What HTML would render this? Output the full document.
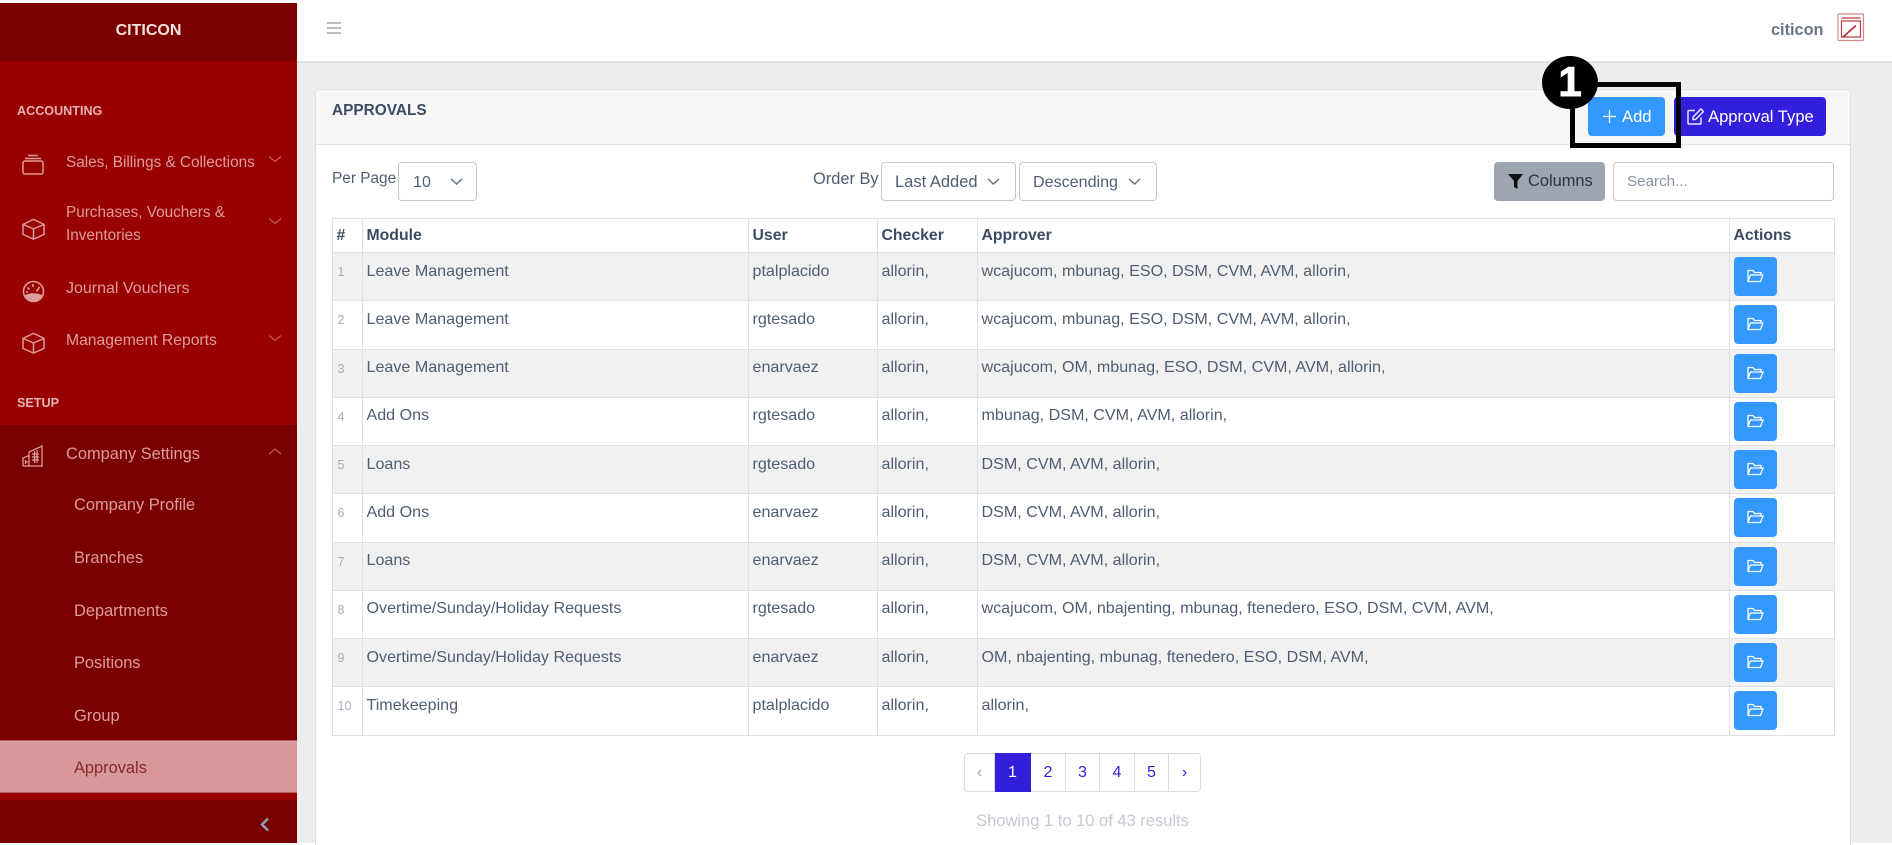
<!DOCTYPE html>
<html><head><meta charset="utf-8"><title>Approvals</title>
<style>
*{box-sizing:border-box}
html,body{margin:0;padding:0;width:1892px;height:845px;overflow:hidden;background:#fff;font-family:"Liberation Sans",sans-serif;color:#4f5d73;font-size:16.1px}
.a{position:absolute;white-space:nowrap}
#page{position:relative;width:1892px;height:845px;overflow:hidden;background:#fff}
.side{color:#dd9c9c}
.lbl{font-weight:bold;font-size:12.6px;color:#e6b2b2}
.ic{fill:none;stroke:#dd9c9c;stroke-width:1.5}
.chev{fill:none;stroke:#c45a5a;stroke-width:1.2}
.sel{background:#fff;border:1px solid #c4c9d0;border-radius:4px;height:39px;line-height:38px;padding-left:13px}
.sel svg{position:absolute;top:15px;fill:none;stroke:#636f83;stroke-width:1.5}
table{position:absolute;left:331.5px;top:218px;width:1502px;border-collapse:collapse;table-layout:fixed;background:#fff}
td,th{border:1px solid #dde0e4;padding:5.5px 4px 0;vertical-align:top;text-align:left;white-space:nowrap;overflow:hidden;height:48.25px;line-height:24px}
th{height:34px;padding-top:5px;font-weight:bold;color:#3c4b64;font-size:15.8px}
tr.s td{background:#f1f1f1}
td.n{font-size:12.5px;color:#a4acb8;padding:7px 0 0 5px}
td.b{padding:4px 0 0 4px}
.go{display:block;width:43px;height:39px;background:#39f;border-radius:4px;position:relative}
.go svg{position:absolute;left:13px;top:11px}
.pg{position:absolute;top:753px;height:39px;line-height:37px;text-align:center;border:1px solid #d8dbe0;border-left:0;color:#321fdb;background:#fff}
</style></head><body><div id="page">

<!-- main bg -->
<div class="a" style="left:297px;top:62px;width:1595px;height:781px;background:#ebedef"></div>
<div class="a" style="left:297px;top:61px;width:1595px;height:2px;background:#dfe2e6"></div>
<!-- topbar -->
<svg class="a" style="left:326px;top:21px" width="16" height="14" viewBox="0 0 16 14"><path d="M1 2h14M1 7h14M1 12h14" stroke="#8a93a2" stroke-width="1.3" fill="none"/></svg>
<div class="a" style="left:1771px;top:18px;line-height:24px;font-weight:bold;color:#6b7585;font-size:16.3px">citicon</div>
<svg class="a" style="left:1837px;top:13px" width="28" height="29" viewBox="0 0 28 29" fill="none"><rect x="1" y="1" width="25.500" height="26.500" rx="1" stroke="#d88a8a" stroke-width="1.200"/><path d="M4.500 5h19M4.500 8h19v16h-19z" stroke="#b84040" stroke-width="1.200"/><path d="M6 24L19 12.500" stroke="#b42a2a" stroke-width="1.600"/></svg>

<!-- sidebar -->
<div class="a" style="left:0;top:3px;width:297px;height:840px;background:#990000"></div>
<div class="a" style="left:0;top:3px;width:297px;height:58px;background:#7a0000"></div>
<div class="a" style="left:0;top:3px;width:297px;height:58px;line-height:56px;text-align:center;color:#f4e2e2;font-weight:bold;font-size:16px">CITICON</div>
<div class="a lbl" style="left:17px;top:104px">ACCOUNTING</div>

<svg class="a ic" style="left:22px;top:154px" width="23" height="21" viewBox="0 0 23 21"><rect x="1" y="7" width="20" height="13" rx="2"/><path d="M3 4.500h16" stroke-width="1.500"/><path d="M6 1.500h10" stroke-width="1.500"/></svg>
<div class="a side" style="left:66px;top:151px;line-height:24px;font-size:15.3px">Sales, Billings &amp; Collections</div>
<svg class="a chev" style="left:268px;top:155px" width="14" height="9" viewBox="0 0 14 9"><path d="M1 1.500l6 5 6-5"/></svg>

<svg class="a ic" style="left:22px;top:218px" width="23" height="22" viewBox="0 0 23 24" preserveAspectRatio="none"><path d="M11.500 1.500L22 7v11l-10.500 5L1 18V7zM1 7l10.500 5L22 7M11.500 12v11"/></svg>
<div class="a side" style="left:66px;top:201px;line-height:23px;font-size:15.300px">Purchases, Vouchers &amp;<br>Inventories</div>
<svg class="a chev" style="left:268px;top:217px" width="14" height="9" viewBox="0 0 14 9"><path d="M1 1.500l6 5 6-5"/></svg>

<svg class="a" style="left:22px;top:280px" width="23" height="23" viewBox="0 0 23 23" fill="none"><circle cx="11.500" cy="11.500" r="10" stroke="#dd9c9c" stroke-width="1.600"/><path d="M2.500 15.500C6 12.500 17 12.500 20.500 15.500C18 21 14 22 11.500 22S5 21 2.500 15.500z" fill="#dd9c9c"/><path d="M11 4v3M5.500 7.500l2 2M17.500 7l-3 4.500M4 12h2" stroke="#dd9c9c" stroke-width="1.600"/></svg>
<div class="a side" style="left:66px;top:277px;line-height:24px;font-size:16px">Journal Vouchers</div>

<svg class="a ic" style="left:22px;top:332px" width="23" height="22" viewBox="0 0 23 24" preserveAspectRatio="none"><path d="M11.500 1.500L22 7v11l-10.500 5L1 18V7zM1 7l10.500 5L22 7M11.500 12v11"/></svg>
<div class="a side" style="left:66px;top:329px;line-height:24px;font-size:15.700px">Management Reports</div>
<svg class="a chev" style="left:268px;top:334px" width="14" height="9" viewBox="0 0 14 9"><path d="M1 1.500l6 5 6-5"/></svg>

<div class="a lbl" style="left:17px;top:396px">SETUP</div>

<div class="a" style="left:0;top:425px;width:297px;height:368px;background:#7a0000"></div>
<svg class="a" style="left:22px;top:445px" width="22" height="22" viewBox="0 0 22 22" fill="none" stroke="#dd9c9c" stroke-width="1.300"><path d="M1 21v-8l6-2.500V21M7 21V7l13-6v20zM1 21h20M10 9h7M10 12h7M10 15h7M12.500 6v12M15 5v13M3.500 15v4M3 17h3"/></svg>
<div class="a side" style="left:66px;top:442px;line-height:24px;font-size:16.400px">Company Settings</div>
<svg class="a chev" style="left:268px;top:447px" width="14" height="9" viewBox="0 0 14 9"><path d="M1 7l6-5 6 5"/></svg>

<div class="a side" style="left:74px;top:493px;line-height:24px;font-size:16.400px">Company Profile</div>
<div class="a side" style="left:74px;top:546px;line-height:24px;font-size:16.400px">Branches</div>
<div class="a side" style="left:74px;top:599px;line-height:24px;font-size:16.400px">Departments</div>
<div class="a side" style="left:74px;top:651px;line-height:24px;font-size:16.400px">Positions</div>
<div class="a side" style="left:74px;top:704px;line-height:24px;font-size:16.400px">Group</div>
<div class="a" style="left:0;top:740px;width:297px;height:53px;background:#d69898;border-top:1px solid #b86060;border-bottom:1px solid #b86060"></div>
<div class="a" style="left:74px;top:756px;line-height:24px;font-size:16.400px;color:#8a2a2a">Approvals</div>
<div class="a" style="left:0;top:800px;width:297px;height:43px;background:#7a0000"></div>
<svg class="a" style="left:259px;top:817px" width="11" height="15" viewBox="0 0 11 15"><path d="M9 1.500L3 7.500l6 6" fill="none" stroke="#8ca0b3" stroke-width="2.500"/></svg>

<!-- card -->
<div class="a" style="left:315px;top:89px;width:1536px;height:760px;background:#fff;border:1px solid #dde0e4;border-radius:4px"></div>
<div class="a" style="left:316px;top:90px;width:1534px;height:55px;background:#f7f7f7;border-bottom:1px solid #dde0e4;border-radius:4px 4px 0 0"></div>
<div class="a" style="left:332px;top:99px;line-height:24px;font-weight:bold;color:#3c4b64;font-size:15.400px">APPROVALS</div>

<div class="a" style="left:1588px;top:97px;width:77px;height:39px;background:#39f;border-radius:4px;color:#fff;line-height:39px;font-size:16.600px"><svg style="position:absolute;left:15px;top:13px" width="13" height="13" viewBox="0 0 13 13"><path d="M6.500 0v13M0 6.500h13" stroke="#fff" stroke-width="1.200"/></svg><span style="position:absolute;left:34px">Add</span></div>
<div class="a" style="left:1674px;top:97px;width:152px;height:39px;background:#321fdb;border-radius:4px;color:#fff;line-height:39px;font-size:16.600px"><svg style="position:absolute;left:13px;top:11px" width="17" height="17" viewBox="0 0 17 17" fill="none" stroke="#e8e6fb" stroke-width="1.500"><path d="M14 9.500V15a1 1 0 0 1-1 1H2a1 1 0 0 1-1-1V3.500a1 1 0 0 1 1-1h6"/><path d="M6 11.500V9l8-8 2.500 2.500-8 8z"/></svg><span style="position:absolute;left:34px">Approval Type</span></div>

<!-- annotation -->
<div class="a" style="left:1570px;top:82px;width:111px;height:66px;border:5px solid #000"></div>
<div class="a" style="left:1542px;top:56px;width:56px;height:53px;border-radius:50%;background:#000;color:#fff;text-align:center;font-weight:bold;font-size:42px;line-height:52px;-webkit-text-stroke:1px #fff">1</div>

<!-- controls -->
<div class="a" style="left:332px;top:167px;line-height:24px;font-size:15.400px">Per Page</div>
<div class="a sel" style="left:398px;top:162px;width:79px;padding-left:14px">10<svg style="left:51px" width="13" height="8" viewBox="0 0 13 8"><path d="M1 1l5.500 5L12 1"/></svg></div>
<div class="a" style="left:813px;top:167px;line-height:24px;font-size:16.400px">Order By</div>
<div class="a sel" style="left:881px;top:162px;width:135px;font-size:16.500px">Last Added<svg style="left:105px" width="13" height="8" viewBox="0 0 13 8"><path d="M1 1l5.500 5L12 1"/></svg></div>
<div class="a sel" style="left:1019px;top:162px;width:138px">Descending<svg style="left:108px" width="13" height="8" viewBox="0 0 13 8"><path d="M1 1l5.500 5L12 1"/></svg></div>
<div class="a" style="left:1494px;top:162px;width:111px;height:39px;background:#9da5b1;border-radius:4px;line-height:39px;color:#2b3446;font-size:16.400px"><svg style="position:absolute;left:14px;top:11px" width="15" height="17" viewBox="0 0 15 17"><path d="M0 1h15L9.500 8v8L6 14V8z" fill="#111"/></svg><span style="position:absolute;left:34px">Columns</span></div>
<div class="a" style="left:1613px;top:162px;width:221px;height:39px;background:#fff;border:1px solid #c4c9d0;border-radius:4px;line-height:37px;padding-left:13px;color:#8a93a2;font-size:15.200px">Search...</div>

<!-- table -->
<table>
<colgroup><col style="width:30px"><col style="width:386px"><col style="width:129px"><col style="width:100px"><col style="width:752px"><col style="width:105px"></colgroup>
<tr><th>#</th><th>Module</th><th>User</th><th>Checker</th><th>Approver</th><th>Actions</th></tr>
<tr class="s"><td class="n">1</td><td>Leave Management</td><td>ptalplacido</td><td>allorin,</td><td>wcajucom, mbunag, ESO, DSM, CVM, AVM, allorin,</td><td class="b"><span class="go"><svg width="17" height="16" viewBox="0 0 17 16" fill="none" stroke="#fff" stroke-width="1.300"><path d="M1 13V2.500h5l1.500 2H14V7M1 13l2.500-6H16l-2.500 6.500H1z"/></svg></span></td></tr>
<tr><td class="n">2</td><td>Leave Management</td><td>rgtesado</td><td>allorin,</td><td>wcajucom, mbunag, ESO, DSM, CVM, AVM, allorin,</td><td class="b"><span class="go"><svg width="17" height="16" viewBox="0 0 17 16" fill="none" stroke="#fff" stroke-width="1.300"><path d="M1 13V2.500h5l1.500 2H14V7M1 13l2.500-6H16l-2.500 6.500H1z"/></svg></span></td></tr>
<tr class="s"><td class="n">3</td><td>Leave Management</td><td>enarvaez</td><td>allorin,</td><td>wcajucom, OM, mbunag, ESO, DSM, CVM, AVM, allorin,</td><td class="b"><span class="go"><svg width="17" height="16" viewBox="0 0 17 16" fill="none" stroke="#fff" stroke-width="1.300"><path d="M1 13V2.500h5l1.500 2H14V7M1 13l2.500-6H16l-2.500 6.500H1z"/></svg></span></td></tr>
<tr><td class="n">4</td><td>Add Ons</td><td>rgtesado</td><td>allorin,</td><td>mbunag, DSM, CVM, AVM, allorin,</td><td class="b"><span class="go"><svg width="17" height="16" viewBox="0 0 17 16" fill="none" stroke="#fff" stroke-width="1.300"><path d="M1 13V2.500h5l1.500 2H14V7M1 13l2.500-6H16l-2.500 6.500H1z"/></svg></span></td></tr>
<tr class="s"><td class="n">5</td><td>Loans</td><td>rgtesado</td><td>allorin,</td><td>DSM, CVM, AVM, allorin,</td><td class="b"><span class="go"><svg width="17" height="16" viewBox="0 0 17 16" fill="none" stroke="#fff" stroke-width="1.300"><path d="M1 13V2.500h5l1.500 2H14V7M1 13l2.500-6H16l-2.500 6.500H1z"/></svg></span></td></tr>
<tr><td class="n">6</td><td>Add Ons</td><td>enarvaez</td><td>allorin,</td><td>DSM, CVM, AVM, allorin,</td><td class="b"><span class="go"><svg width="17" height="16" viewBox="0 0 17 16" fill="none" stroke="#fff" stroke-width="1.300"><path d="M1 13V2.500h5l1.500 2H14V7M1 13l2.500-6H16l-2.500 6.500H1z"/></svg></span></td></tr>
<tr class="s"><td class="n">7</td><td>Loans</td><td>enarvaez</td><td>allorin,</td><td>DSM, CVM, AVM, allorin,</td><td class="b"><span class="go"><svg width="17" height="16" viewBox="0 0 17 16" fill="none" stroke="#fff" stroke-width="1.300"><path d="M1 13V2.500h5l1.500 2H14V7M1 13l2.500-6H16l-2.500 6.500H1z"/></svg></span></td></tr>
<tr><td class="n">8</td><td>Overtime/Sunday/Holiday Requests</td><td>rgtesado</td><td>allorin,</td><td>wcajucom, OM, nbajenting, mbunag, ftenedero, ESO, DSM, CVM, AVM,</td><td class="b"><span class="go"><svg width="17" height="16" viewBox="0 0 17 16" fill="none" stroke="#fff" stroke-width="1.300"><path d="M1 13V2.500h5l1.500 2H14V7M1 13l2.500-6H16l-2.500 6.500H1z"/></svg></span></td></tr>
<tr class="s"><td class="n">9</td><td>Overtime/Sunday/Holiday Requests</td><td>enarvaez</td><td>allorin,</td><td>OM, nbajenting, mbunag, ftenedero, ESO, DSM, AVM,</td><td class="b"><span class="go"><svg width="17" height="16" viewBox="0 0 17 16" fill="none" stroke="#fff" stroke-width="1.300"><path d="M1 13V2.500h5l1.500 2H14V7M1 13l2.500-6H16l-2.500 6.500H1z"/></svg></span></td></tr>
<tr><td class="n">10</td><td>Timekeeping</td><td>ptalplacido</td><td>allorin,</td><td>allorin,</td><td class="b"><span class="go"><svg width="17" height="16" viewBox="0 0 17 16" fill="none" stroke="#fff" stroke-width="1.300"><path d="M1 13V2.500h5l1.500 2H14V7M1 13l2.500-6H16l-2.500 6.500H1z"/></svg></span></td></tr>
</table>

<!-- pagination -->
<div class="pg" style="left:964px;width:31px;border-left:1px solid #d8dbe0;border-radius:4px 0 0 4px;color:#9da5b1">‹</div>
<div class="pg" style="left:995px;width:36px;background:#321fdb;border-color:#321fdb;color:#fff">1</div>
<div class="pg" style="left:1031px;width:35px">2</div>
<div class="pg" style="left:1066px;width:34px">3</div>
<div class="pg" style="left:1100px;width:35px">4</div>
<div class="pg" style="left:1135px;width:34px">5</div>
<div class="pg" style="left:1169px;width:32px;border-radius:0 4px 4px 0">›</div>
<div class="a" style="left:964px;top:809px;width:237px;text-align:center;line-height:24px;color:#c4c9d0;font-size:16.500px">Showing 1 to 10 of 43 results</div>

</div></body></html>
